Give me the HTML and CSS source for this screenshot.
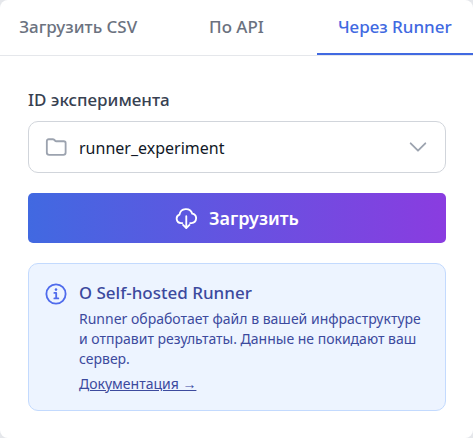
FILE: index.html
```html
<!DOCTYPE html>
<html lang="ru">
<head>
<meta charset="utf-8">
<meta name="viewport" content="width=device-width, initial-scale=1">
<title>Загрузка результатов</title>
<link rel="stylesheet" href="styles.css">
</head>
<body>
<main class="card">
  <nav class="tabs">
    <button type="button" class="tab">Загрузить CSV</button>
    <button type="button" class="tab">По API</button>
    <button type="button" class="tab tab-active">Через Runner</button>
  </nav>
  <form class="panel">
    <div class="field">
      <label class="label" for="experiment">ID эксперимента</label>
      <div class="select-box">
        <svg class="icon folder" viewBox="0 0 24 24" aria-hidden="true"><path d="M2 18V5.500a2 2 0 0 1 2-2h4.600a2 2 0 0 1 1.400.600l1.100 1.100a1.500 1.500 0 0 0 1.100.500H20.500a2 2 0 0 1 2 2V18a2.500 2.500 0 0 1-2.500 2.500H4.500A2.500 2.500 0 0 1 2 18z"/></svg>
        <select class="select" id="experiment">
          <option>runner_experiment</option>
        </select>
        <svg class="icon chevron" viewBox="0 0 24 24" aria-hidden="true"><path d="M4 8l8 8 8-8"/></svg>
      </div>
    </div>
    <button type="button" class="submit">
      <svg class="icon" viewBox="0 0 24 24" aria-hidden="true"><path d="M8 17.500H6.500a4.700 4.700 0 0 1-1.600-9.100A7.200 7.200 0 0 1 18.800 7.200a5.200 5.200 0 0 1-.800 10.300h-1.500M12.300 10v12.500M8.800 19.500l3.500 3.500 3.500-3.500"/></svg>
      <span>Загрузить</span>
    </button>
    <section class="note">
      <svg class="icon info" viewBox="0 0 24 24" aria-hidden="true"><circle cx="12" cy="12" r="10.500"/><path class="info-mark" d="M10.200 10.800h2v5.700M10.200 16.800h4.300"/><circle class="dot" cx="12" cy="7.200" r="1.400"/></svg>
      <div class="note-body">
        <h2 class="note-title">О Self-hosted Runner</h2>
        <p class="note-text">Runner обработает файл в вашей инфраструктуре и отправит результаты. Данные не покидают ваш сервер.</p>
        <a class="note-link" href="#docs">Документация →</a>
      </div>
    </section>
  </form>
</main>
</body>
</html>
```
FILE: styles.css
```css
* {
  box-sizing: border-box;
}

body {
  margin: 0;
  background: #e5e7eb;
  color: #111827;
  font-family: "Segoe UI", "Noto Sans", "Open Sans", sans-serif;
}

button,
select {
  font-family: inherit;
}

.card {
  min-height: 100vh;
  background: #fff;
  border-radius: 8px;
  overflow: hidden;
}

.tabs {
  display: grid;
  grid-template-columns: repeat(3, 1fr);
  column-gap: 2px;
  border-bottom: 1px solid #e5e7eb;
}

.tab {
  height: 55px;
  padding: 0;
  border: 0;
  border-bottom: 2px solid transparent;
  background: none;
  color: #6b7280;
  font-size: 17px;
  font-weight: 500;
  white-space: nowrap;
}

.tab-active {
  border-bottom-color: #4169e1;
  color: #4169e1;
}

.panel {
  display: grid;
  gap: 20px;
  padding: 32px 27px 27px 28px;
}

.field {
  display: grid;
  gap: 9px;
}

.label {
  color: #374151;
  font-size: 17px;
  font-weight: 500;
  line-height: 24px;
}

.icon {
  flex: none;
  width: 22px;
  height: 22px;
  fill: none;
  stroke: currentColor;
  stroke-width: 2;
  stroke-linecap: round;
  stroke-linejoin: round;
}

.select-box {
  display: grid;
  align-items: center;
  height: 52px;
  border: 1px solid #d1d5db;
  border-radius: 10px;
  color: #9ca3af;
}

.select-box > * {
  grid-area: 1 / 1;
}

.select {
  width: 100%;
  height: 100%;
  padding: 2px 50px 0;
  border: 0;
  border-radius: 10px;
  appearance: none;
  background: none;
  color: #111827;
  font-size: 16px;
}

.folder {
  margin-left: 16px;
}

.chevron {
  justify-self: end;
  margin-right: 16px;
}

.submit {
  display: flex;
  align-items: center;
  justify-content: center;
  gap: 12px;
  height: 50px;
  border: 0;
  border-radius: 5px;
  background: linear-gradient(90deg, #4169e1, #8a3ce0);
  color: #fff;
  font-size: 18px;
  font-weight: 600;
}

.note {
  display: flex;
  gap: 12px;
  padding: 17px 16px 16px;
  border: 1px solid #c3dafe;
  border-radius: 10px;
  background: #edf4ff;
  color: #3c4a9e;
}

.info {
  margin-top: 2px;
  color: #4f6bec;
}

.info-mark {
  stroke-width: 2;
}

.dot {
  fill: currentColor;
  stroke: none;
}

.note-title {
  margin: 0 0 4px;
  font-size: 17px;
  font-weight: 500;
  line-height: 24px;
}

.note-text {
  margin: 0 0 5px;
  font-size: 14px;
  line-height: 20px;
}

.note-link {
  display: block;
  color: inherit;
  font-size: 14px;
  line-height: 20px;
}
```
